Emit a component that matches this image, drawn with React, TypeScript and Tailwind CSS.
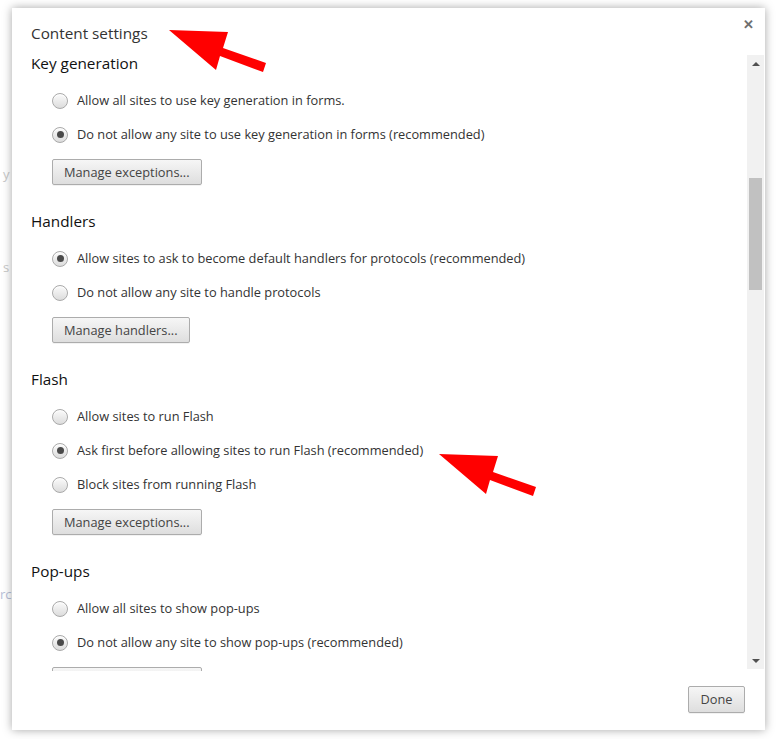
import React from 'react';

const font = { fontFamily: '"Open Sans", "Noto Sans", Arial, sans-serif' };

type Section = {
  title: string;
  options: { label: string; checked?: boolean }[];
  button: string;
};

const sections: Section[] = [
  {
    title: 'Key generation',
    options: [
      { label: 'Allow all sites to use key generation in forms.' },
      { label: 'Do not allow any site to use key generation in forms (recommended)', checked: true },
    ],
    button: 'Manage exceptions...',
  },
  {
    title: 'Handlers',
    options: [
      { label: 'Allow sites to ask to become default handlers for protocols (recommended)', checked: true },
      { label: 'Do not allow any site to handle protocols' },
    ],
    button: 'Manage handlers...',
  },
  {
    title: 'Flash',
    options: [
      { label: 'Allow sites to run Flash' },
      { label: 'Ask first before allowing sites to run Flash (recommended)', checked: true },
      { label: 'Block sites from running Flash' },
    ],
    button: 'Manage exceptions...',
  },
  {
    title: 'Pop-ups',
    options: [
      { label: 'Allow all sites to show pop-ups' },
      { label: 'Do not allow any site to show pop-ups (recommended)', checked: true },
    ],
    button: 'Manage exceptions...',
  },
];

const Radio: React.FC<{ checked?: boolean }> = ({ checked }) => (
  <span className="w-[16px] h-[16px] rounded-full border border-[#a9a9a9] bg-gradient-to-b from-[#fbfbfb] to-[#dcdcdc] shadow-[inset_0_1px_1px_rgba(255,255,255,0.9)] flex items-center justify-center shrink-0">
    {checked && <span className="w-[7px] h-[7px] rounded-full bg-[#4a4a4a]" />}
  </span>
);

const Button: React.FC<{ children: React.ReactNode; className?: string }> = ({ children, className }) => (
  <button
    className={`h-[26px] px-[11px] rounded-[2px] border border-[#acacac] bg-gradient-to-b from-[#f6f6f6] to-[#dedede] text-[12.8px] text-[#444] leading-none shadow-[0_1px_0_rgba(0,0,0,0.05)] ${className ?? ''}`}
    style={font}
  >
    {children}
  </button>
);

const Arrow: React.FC<{ left: number; top: number }> = ({ left, top }) => (
  <svg
    className="absolute pointer-events-none"
    style={{ left, top }}
    width="100"
    height="46"
    viewBox="0 0 100 46"
  >
    <polygon points="0,0 59,2 54,18 97,33 94,42 51,26 47,40" fill="#ff0000" />
  </svg>
);

export default function App() {
  return (
    <div className="relative w-[777px] h-[739px] bg-white overflow-hidden" style={font}>
      {/* page behind the dialog */}
      <div className="flex flex-col pl-[3px] text-[13px] text-[#c8c8c8]">
        <span className="mt-[164px] leading-[20px]">y</span>
        <span className="mt-[73px] leading-[20px]">s</span>
        <span className="mt-[307px] leading-[20px] -ml-[3px] text-[#b8bfd8]">rc</span>
      </div>

      {/* dialog */}
      <div className="absolute left-[12px] top-[8px] w-[753px] h-[722px] bg-white shadow-[0_0_9px_rgba(0,0,0,0.35)] flex flex-col">
        <div className="h-[45px] flex items-start justify-between pl-[19px] pr-[11px] pt-[15px]">
          <span className="text-[15.3px] text-[#333] leading-[20px]">Content settings</span>
          <span className="text-[#6e6e6e] text-[13px] font-bold leading-none -mt-[5px]">✕</span>
        </div>

        <div className="h-[618px] flex">
          <div className="flex-1 overflow-hidden pl-[19px]">
            {sections.map((s, i) => (
              <div key={s.title} className={i === 0 ? '' : 'mt-[26px]'}>
                <div className="h-[20px] leading-[20px] text-[15.3px] text-[#111]">{s.title}</div>
                <div className="mt-[10.5px] pl-[21px]">
                  {s.options.map((o) => (
                    <div key={o.label} className="h-[34px] flex items-center gap-[9px]">
                      <Radio checked={o.checked} />
                      <span className="text-[12.8px] text-[#333]">{o.label}</span>
                    </div>
                  ))}
                  <Button className="mt-[7.5px]">{s.button}</Button>
                </div>
              </div>
            ))}
          </div>

          {/* scrollbar */}
          <div className="w-[17px] mr-[1px] mt-[2px] mb-[2px] bg-[#f1f1f1] flex flex-col items-center">
            <div className="h-[17px] flex items-center justify-center">
              <span className="w-0 h-0 border-l-[4px] border-r-[4px] border-b-[4px] border-l-transparent border-r-transparent border-b-[#505050]" />
            </div>
            <div className="flex-1 w-full">
              <div className="mt-[106px] mx-[2px] h-[112px] bg-[#c1c1c1]" />
            </div>
            <div className="h-[17px] flex items-center justify-center">
              <span className="w-0 h-0 border-l-[4px] border-r-[4px] border-t-[4px] border-l-transparent border-r-transparent border-t-[#505050]" />
            </div>
          </div>
        </div>

        <div className="flex-1 flex justify-end items-start pt-[15px] pr-[20px]">
          <Button className="h-[27px] w-[57px] px-0">Done</Button>
        </div>
      </div>

      <Arrow left={169} top={30} />
      <Arrow left={439} top={454} />
    </div>
  );
}
